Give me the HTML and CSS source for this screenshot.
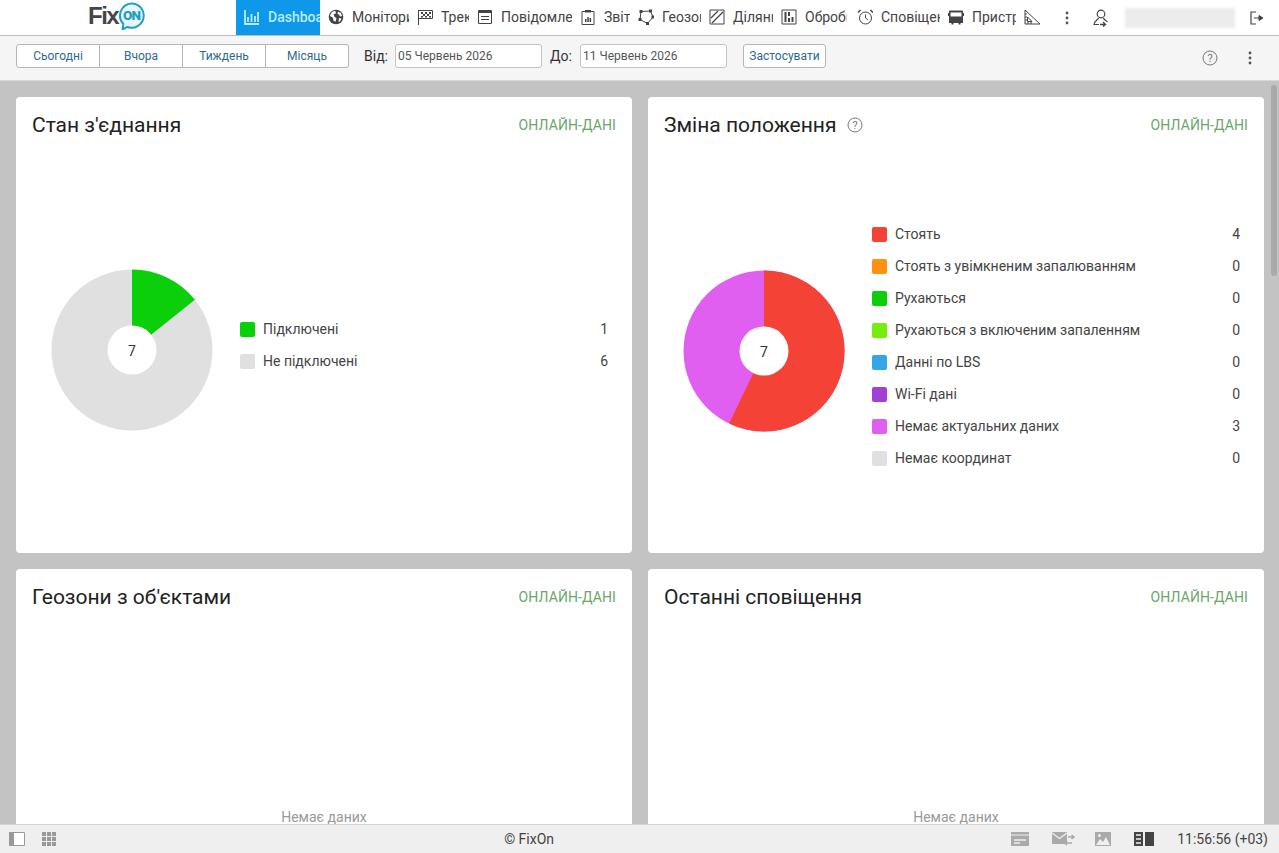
FILE: index.html
```html
<!DOCTYPE html>
<html lang="uk">
  <head>
    <meta charset="UTF-8" />
    <meta name="viewport" content="width=device-width, initial-scale=1.0" />
    <title>FixOn Dashboard</title>
    <link rel="stylesheet" href="styles.css">
  </head>
  <body>
    <!-- top menu -->
    <header class="topbar">
      <div class="logo">
        <span class="logo-fix">Fix</span>
        <svg class="logo-bubble" width="27" height="28" viewBox="0 0 30 31">
          <path d="M15 1.500a13.500 13.500 0 1 1-4.500 26.200l-5.500 2.800 1-6.200A13.500 13.500 0 0 1 15 1.500z" fill="#e6f6fb" stroke="#1f9fc4" stroke-width="2.200" stroke-linejoin="round"/>
          <text x="15" y="20" text-anchor="middle" class="logo-on">ON</text>
        </svg>
      </div>
      <nav class="menu">
        <a class="menu-item active item-dash">
          <svg class="icon" viewBox="0 0 16 16"><path d="M1 1v14h14M4 8v5M7.500 5v8M11 7v6M14 3v10" fill="none" stroke="currentColor" stroke-width="1.800"/></svg>
          <span class="menu-label">Dashboard</span>
        </a>
        <a class="menu-item item-mon">
          <svg class="icon" viewBox="0 0 16 16"><circle cx="8" cy="8" r="7.300" fill="#444"/><path d="M3 4l3-2.200 2 1-.5 2-2 .5 1 2.500 2 1.500-1 3.500-2-1-.5-3L2 7zM10 2.500l3 1.500 1 3-2 .5-1-2-1.500-.5zM11 9l2.500.5-1.500 3-1.500.5z" fill="#fff"/></svg>
          <span class="menu-label">Моніторинг</span>
        </a>
        <a class="menu-item item-trek">
          <svg class="icon" viewBox="0 0 16 16"><path d="M1.500 1v15" stroke="#444" stroke-width="1"/><path d="M1.500 1.500h14v8h-14" fill="none" stroke="#444"/><path d="M4 3h2v2H4zM8 3h2v2H8zM12 3h2v2h-2zM6 5h2v2H6zM10 5h2v2h-2zM4 7h2v1.500H4zM8 7h2v1.500H8zM12 7h2v1.500h-2z" fill="#444"/></svg>
          <span class="menu-label">Трек</span>
        </a>
        <a class="menu-item item-pov">
          <svg class="icon" viewBox="0 0 16 16"><path d="M1.500 1.500h13v13h-13z" fill="none" stroke="#444"/><path d="M1.500 1.500h13v2.500h-13zM4 7h8v1H4zM4 10h8v1H4z" fill="#444"/></svg>
          <span class="menu-label">Повідомлення</span>
        </a>
        <a class="menu-item item-zvit">
          <svg class="icon" viewBox="0 0 16 16"><path d="M2 2.500h12v13H2z" fill="none" stroke="#444"/><path d="M5 1h6v2.500H5zM5 10h1.500v3H5zM7.300 8h1.500v5H7.300zM9.600 9h1.500v4H9.600z" fill="#444"/></svg>
          <span class="menu-label">Звіти</span>
        </a>
        <a class="menu-item item-geo">
          <svg class="icon" viewBox="0 0 16 16"><path d="M3 2.500l9.500-.5 2.500 6-5.500 6.500L2 10.500z" fill="none" stroke="#444"/><path d="M1.500 1h3v3h-3zM11 .5h3v3h-3zM13.500 6.500h2.500v3h-2.500zM8 13h3v3H8zM.5 9h3v3h-3z" fill="#444"/></svg>
          <span class="menu-label">Геозони</span>
        </a>
        <a class="menu-item item-dil">
          <svg class="icon" viewBox="0 0 16 16"><path d="M1 1h14v14H1z" fill="none" stroke="#444"/><path d="M2 9L9 2M3 14L14 3" fill="none" stroke="#444" stroke-width="1.300"/></svg>
          <span class="menu-label">Ділянки</span>
        </a>
        <a class="menu-item item-obr">
          <svg class="icon" viewBox="0 0 16 16"><path d="M1 1h14v14H1z" fill="none" stroke="#444"/><path d="M3.500 3h2v10h-2zM7 3h2v4H7zM7 9h2v4H7zM10.500 8h2v5h-2zM3.500 6h2v1h-2z" fill="#444"/></svg>
          <span class="menu-label">Обробка</span>
        </a>
        <a class="menu-item item-spov">
          <svg class="icon" viewBox="0 0 16 16"><circle cx="8.500" cy="9" r="6" fill="none" stroke="#444"/><path d="M8.500 5.500V9l2.500 2" fill="none" stroke="#444"/><path d="M1 3.500L3.500 1M16 3.500L13.500 1" stroke="#444" stroke-width="1.500"/></svg>
          <span class="menu-label">Сповіщення</span>
        </a>
        <a class="menu-item item-prist">
          <svg class="icon" viewBox="0 0 16 16"><path d="M2 1.500h12a1 1 0 0 1 1 1V14h-2.500v1.500h-2V14h-5v1.500h-2V14H1V2.500a1 1 0 0 1 1-1zM2.500 3.500v4h11v-4z" fill="#444" fill-rule="evenodd"/><path d="M0 4h1v3H0zM15 4h1v3h-1z" fill="#444"/></svg>
          <span class="menu-label">Пристрої</span>
        </a>
        <a class="menu-item item-ruler">
          <svg class="icon icon-ruler" viewBox="0 0 17 16"><path d="M1 1v14h15z" fill="none" stroke="#444"/><path d="M3.500 8v4.500H8z" fill="none" stroke="#444"/><path d="M1 5h2M1 8h2M1 11h2M4 15v-2M7 15v-2" stroke="#444"/></svg>
        </a>
      </nav>
      <div class="topbar-right">
        <svg class="dots" width="4" height="14" viewBox="0 0 4 14"><circle cx="2" cy="2" r="1.400"/><circle cx="2" cy="7" r="1.400"/><circle cx="2" cy="12" r="1.400"/></svg>
        <svg class="user-icon" width="16" height="18" viewBox="0 0 16 18"><circle cx="8" cy="5" r="3.800" fill="none" stroke="#444" stroke-width="1.200"/><path d="M5.500 9c-.5 2-4 2.500-4.500 6.500h5M10.500 9c.5 2 3 2.500 4 4" fill="none" stroke="#444" stroke-width="1.200"/><path d="M7 15.500h5M10 13l2.500 2.500-2.500 2" fill="none" stroke="#444" stroke-width="1.300"/></svg>
        <div class="user-blur"></div>
        <svg class="exit-icon" width="14" height="14" viewBox="0 0 14 14"><path d="M6 1H1v12h5" fill="none" stroke="#444" stroke-width="1.200"/><path d="M4 7h6M9 4.500v5l4-2.500z" fill="#444" stroke="#444" stroke-width="1"/></svg>
      </div>
    </header>

    <!-- date filter -->
    <div class="toolbar">
      <div class="btn-group">
        <button class="btn">Сьогодні</button>
        <button class="btn">Вчора</button>
        <button class="btn">Тиждень</button>
        <button class="btn">Місяць</button>
      </div>
      <label class="date-label first">Від:</label>
      <input class="date-input" type="text" value="05 Червень 2026" />
      <label class="date-label">До:</label>
      <input class="date-input" type="text" value="11 Червень 2026" />
      <button class="btn apply">Застосувати</button>
      <div class="toolbar-right">
        <svg class="help" width="16" height="16" viewBox="0 0 16 16"><circle cx="8" cy="8" r="7" fill="none" stroke="#777"/><text x="8" y="11.500" text-anchor="middle" class="help-q">?</text></svg>
        <svg class="dots" width="4" height="14" viewBox="0 0 4 14"><circle cx="2" cy="2" r="1.400"/><circle cx="2" cy="7" r="1.400"/><circle cx="2" cy="12" r="1.400"/></svg>
      </div>
    </div>

    <main class="board">
      <section class="card">
        <div class="card-head">
          <h2>Стан з'єднання</h2>
          <span class="online">ОНЛАЙН-ДАНІ</span>
        </div>
        <div class="card-body">
          <svg class="pie" width="162" height="162" viewBox="-81 -81 162 162">
            <circle r="80.500" fill="#e0e0e0"/>
            <path d="M0 0V-80.500A80.500 80.500 0 0 1 62.900 -50.200z" fill="#0ccf0c"/>
            <circle r="24.500" fill="#fff"/>
            <text y="5.500" text-anchor="middle" class="pie-total">7</text>
          </svg>
          <ul class="legend">
            <li><i class="swatch green"></i><span>Підключені</span><b>1</b></li>
            <li><i class="swatch grey"></i><span>Не підключені</span><b>6</b></li>
          </ul>
        </div>
      </section>

      <section class="card">
        <div class="card-head">
          <h2>Зміна положення</h2>
          <svg class="title-help" width="16" height="16" viewBox="0 0 16 16"><circle cx="8" cy="8" r="7" fill="none" stroke="#777"/><text x="8" y="11.500" text-anchor="middle" class="help-q">?</text></svg>
          <span class="online">ОНЛАЙН-ДАНІ</span>
        </div>
        <div class="card-body body-tall">
          <svg class="pie" width="162" height="162" viewBox="-81 -81 162 162">
            <circle r="80.500" fill="#e15ff0"/>
            <path d="M0 0V-80.500A80.500 80.500 0 1 1 -34.900 72.500z" fill="#f44336"/>
            <circle r="24.500" fill="#fff"/>
            <text y="5.500" text-anchor="middle" class="pie-total">7</text>
          </svg>
          <ul class="legend">
            <li><i class="swatch red"></i><span>Стоять</span><b>4</b></li>
            <li><i class="swatch orange"></i><span>Стоять з увімкненим запалюванням</span><b>0</b></li>
            <li><i class="swatch green"></i><span>Рухаються</span><b>0</b></li>
            <li><i class="swatch lime"></i><span>Рухаються з включеним запаленням</span><b>0</b></li>
            <li><i class="swatch blue"></i><span>Данні по LBS</span><b>0</b></li>
            <li><i class="swatch purple"></i><span>Wi-Fi дані</span><b>0</b></li>
            <li><i class="swatch pink"></i><span>Немає актуальних даних</span><b>3</b></li>
            <li><i class="swatch grey"></i><span>Немає координат</span><b>0</b></li>
          </ul>
        </div>
      </section>

      <section class="card">
        <div class="card-head">
          <h2>Геозони з об'єктами</h2>
          <span class="online">ОНЛАЙН-ДАНІ</span>
        </div>
        <div class="card-body empty">Немає даних</div>
      </section>

      <section class="card">
        <div class="card-head">
          <h2>Останні сповіщення</h2>
          <span class="online">ОНЛАЙН-ДАНІ</span>
        </div>
        <div class="card-body empty">Немає даних</div>
      </section>

      <div class="scroll-thumb"></div>
    </main>

    <footer class="statusbar">
      <div class="status-left">
        <svg width="16" height="14" viewBox="0 0 16 14"><path d="M.500.500h15v13H.500z" fill="#fff" stroke="#999"/><path d="M0 0h5v14H0z" fill="#999"/></svg>
        <svg width="14" height="14" viewBox="0 0 14 14" fill="#999"><path d="M0 0h4v4H0zM5 0h4v4H5zM10 0h4v4h-4zM0 5h4v4H0zM5 5h4v4H5zM10 5h4v4h-4zM0 10h4v4H0zM5 10h4v4H5zM10 10h4v4h-4z"/></svg>
      </div>
      <div class="status-center">© FixOn</div>
      <div class="status-right">
        <svg width="18" height="14" viewBox="0 0 18 14"><path d="M0 0h18v14H0z" fill="#aaa"/><path d="M0 3h18" stroke="#efefef"/><path d="M3 8h12M3 11h6" stroke="#efefef" stroke-width="1.500"/></svg>
        <svg width="23" height="14" viewBox="0 0 23 14"><path d="M0 0h15v12H0z" fill="#aaa"/><path d="M0 1l7.500 5.500L15 1" fill="none" stroke="#efefef" stroke-width="1.300"/><path d="M16 5h6M19.500 3l2.500 2-2.500 2M20 11h-7M15 9l-2.500 2 2.500 2" fill="none" stroke="#aaa" stroke-width="1.500"/></svg>
        <svg class="image-icon" width="16" height="14" viewBox="0 0 16 14"><path d="M0 0h16v14H0z" fill="#aaa"/><path d="M1 13l4-6 3 3 3-5 4 8z" fill="#efefef"/><circle cx="4.500" cy="3.500" r="1.500" fill="#efefef"/></svg>
        <svg class="panel-icon" width="20" height="14" viewBox="0 0 20 14"><path d="M0 0h9v14H0zM11 0h9v14h-9z" fill="#444"/><path d="M2 3h5M2 7h5M2 11h5" stroke="#efefef" stroke-width="1.500"/></svg>
        <span class="clock">11:56:56 (+03)</span>
      </div>
    </footer>
  </body>
</html>
```

FILE: styles.css
```css
* {
  box-sizing: border-box;
}
html,
body {
  height: 100%;
}
body {
  margin: 0;
  display: flex;
  flex-direction: column;
  overflow: hidden;
  font-family: Roboto, "Liberation Sans", sans-serif;
  color: #333;
}

/* top menu */
.topbar {
  height: 36px;
  flex: none;
  display: flex;
  align-items: stretch;
  background: #fff;
  border-bottom: 1px solid #bdbdbd;
}
.logo {
  width: 236px;
  flex: none;
  display: flex;
  align-items: center;
  padding: 0 0 3px 88px;
}
.logo-fix {
  font-family: "Liberation Sans", Arial, sans-serif;
  font-size: 24px;
  font-weight: 700;
  letter-spacing: -1.5px;
  color: #454545;
}
.logo-bubble {
  margin-left: 0;
}
.logo-on {
  font-family: Roboto, sans-serif;
  font-size: 15px;
  font-weight: 900;
  letter-spacing: -1px;
  fill: #1f9fc4;
}
.menu {
  display: flex;
}
.menu-item {
  display: flex;
  align-items: center;
  height: 35px;
  padding: 0 0 1px 8px;
  gap: 8px;
  font-size: 14px;
  color: #444;
  cursor: pointer;
}
.menu-item.active {
  background: #0f97ea;
  color: #b4f0ff;
  font-weight: 500;
}
.icon {
  width: 16px;
  height: 16px;
  flex: none;
}
.icon-ruler {
  width: 17px;
}
.menu-label {
  display: block;
  overflow: hidden;
  white-space: nowrap;
}
.item-dash .menu-label { width: 52px; }
.item-mon .menu-label { width: 57px; }
.item-trek .menu-label { width: 28px; }
.item-pov .menu-label { width: 71px; }
.item-zvit .menu-label { width: 26px; }
.item-geo .menu-label { width: 39px; }
.item-dil .menu-label { width: 40px; }
.item-obr .menu-label { width: 42px; }
.item-spov { margin-left: 2px; }
.item-spov .menu-label { width: 59px; }
.item-prist .menu-label { width: 44px; }

.topbar-right {
  margin-left: auto;
  display: flex;
  align-items: center;
  padding-right: 15px;
}
.dots {
  fill: #555;
  flex: none;
}
.user-icon {
  margin-left: 24px;
}
.user-blur {
  width: 110px;
  height: 20px;
  margin-left: 16px;
  background: #ececec;
  filter: blur(1.5px);
}
.exit-icon {
  margin-left: 15px;
}

/* date filter */
.toolbar {
  position: relative;
  height: 45px;
  flex: none;
  display: flex;
  align-items: flex-start;
  padding: 8px 27px 0 16px;
  background: #f5f5f5;
  border-bottom: 1px solid #d8d8d8;
}
.btn-group {
  display: flex;
  width: 333px;
  height: 24px;
  background: #fff;
  border: 1px solid #b5b5b5;
  border-radius: 3px;
}
.btn {
  font-family: inherit;
  font-size: 12px;
  color: #2c6a8c;
  background: #fff;
  border: none;
  padding: 0;
  cursor: pointer;
}
.btn-group .btn {
  flex: 1;
  background: none;
  border-right: 1px solid #b5b5b5;
}
.btn-group .btn:last-child {
  border-right: none;
}
.date-label {
  font-size: 14px;
  line-height: 24px;
  color: #333;
  margin-left: 8px;
  width: 30px;
}
.date-label.first {
  margin-left: 15px;
  width: 31px;
}
.date-input {
  width: 147px;
  height: 24px;
  padding: 0 2px;
  font-family: inherit;
  font-size: 12px;
  color: #555;
  background: #fff;
  border: 1px solid #c4c4c4;
  border-radius: 3px;
}
.apply {
  width: 83px;
  height: 24px;
  margin-left: 16px;
  border: 1px solid #b5b5b5;
  border-radius: 3px;
}
.toolbar-right {
  margin-left: auto;
  height: 28px;
  display: flex;
  align-items: center;
  gap: 30px;
}
.help-q {
  font-family: Roboto, sans-serif;
  font-size: 11px;
  fill: #777;
}

/* cards */
.board {
  position: relative;
  flex: 1;
  min-height: 0;
  overflow: hidden;
  display: grid;
  grid-template-columns: 616px 616px;
  grid-auto-rows: 456px;
  gap: 16px;
  padding: 16px 15px 0 16px;
  background: #c3c3c3;
}
.card {
  display: flex;
  flex-direction: column;
  background: #fff;
  border-radius: 4px;
}
.card-head {
  height: 40px;
  flex: none;
  display: flex;
  align-items: center;
  padding: 16px 16px 0;
}
.card-head h2 {
  margin: 0;
  font-size: 21px;
  font-weight: 400;
  color: #222;
}
.title-help {
  margin-left: 10px;
}
.online {
  margin-left: auto;
  font-size: 14px;
  letter-spacing: 0.1px;
  color: #6aa56a;
}
.card-body {
  flex: 1;
  display: flex;
  align-items: center;
  padding: 0 24px 0 35px;
}
.body-tall {
  padding-top: 2px;
}
.pie {
  flex: none;
  margin-top: 10px;
}
.pie-total {
  font-size: 14px;
  fill: #333;
}
.legend {
  flex: 1;
  margin: 0 0 0 27px;
  padding: 0;
  list-style: none;
}
.legend li {
  display: flex;
  align-items: center;
  height: 32px;
  font-size: 14px;
  color: #444;
}
.legend span {
  flex: 1;
}
.legend b {
  font-weight: 400;
}
.swatch {
  width: 15px;
  height: 15px;
  margin-right: 8px;
  border-radius: 2px;
}
.swatch.green { background: #0ccf0c; }
.swatch.grey { background: #e0e0e0; }
.swatch.red { background: #f44336; }
.swatch.orange { background: #ff9011; }
.swatch.lime { background: #76ee0c; }
.swatch.blue { background: #35a4e8; }
.swatch.purple { background: #a33fd6; }
.swatch.pink { background: #e15ff0; }

.empty {
  justify-content: center;
  padding: 0;
  font-size: 14px;
  color: #999;
}
.scroll-thumb {
  position: absolute;
  top: 4px;
  right: 2px;
  width: 6px;
  height: 191px;
  background: #a9a9a9;
  border-radius: 3px;
}

/* bottom bar */
.statusbar {
  height: 29px;
  flex: none;
  display: flex;
  align-items: center;
  padding: 0 11px 0 9px;
  font-size: 14px;
  color: #444;
  background: #efefef;
  border-top: 1px solid #d4d4d4;
}
.status-left {
  display: flex;
  align-items: center;
  gap: 17px;
}
.status-center {
  flex: 1;
  padding-right: 9px;
  text-align: center;
}
.status-right {
  display: flex;
  align-items: center;
  gap: 23px;
}
.image-icon {
  margin-left: -3px;
}
.clock {
  font-size: 14px;
}
```
